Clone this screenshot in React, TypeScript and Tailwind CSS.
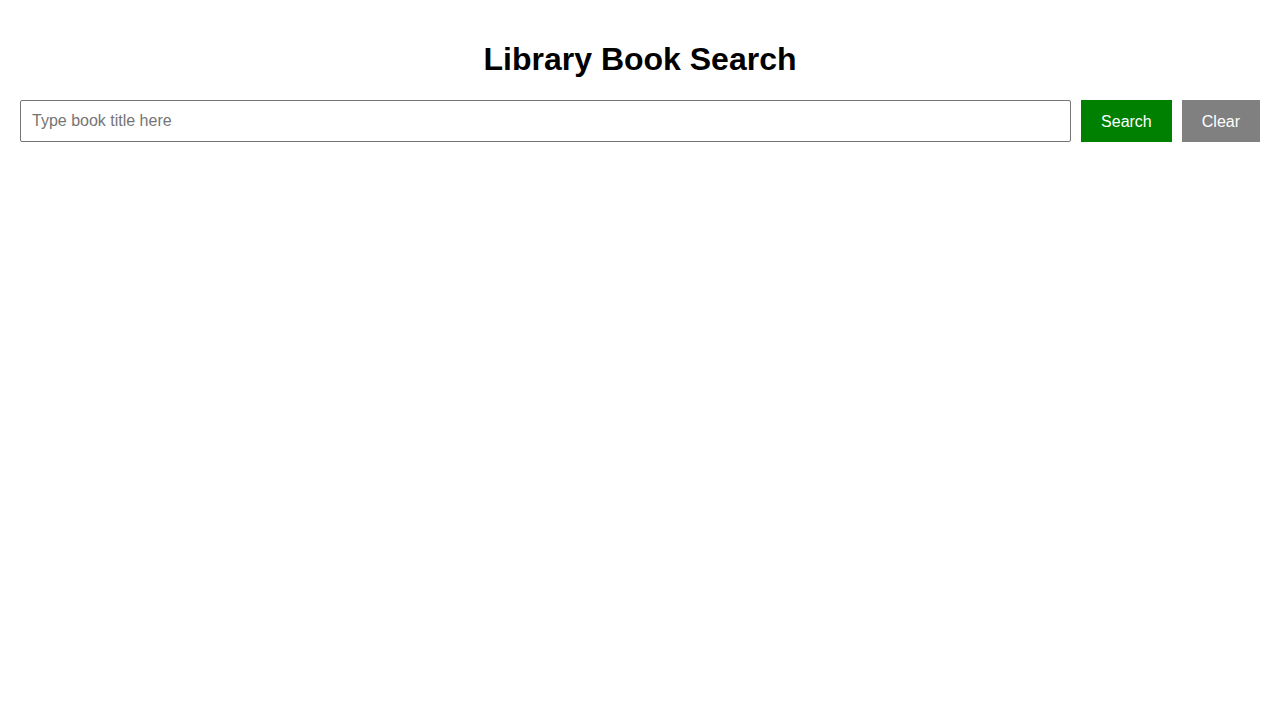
export default function App() {
  return (
    <div className="min-h-screen bg-white p-5 font-['Liberation_Sans',Arial,sans-serif] text-black">
      <h1 className="mt-[21px] mb-[22px] text-center text-[32px] font-bold leading-[37px]">Library Book Search</h1>
      <div className="flex gap-[10px]">
        <input
          type="text"
          placeholder="Type book title here"
          className="h-[42px] flex-1 rounded-[2px] border border-[#767676] px-[11px] text-base text-black placeholder:text-[#757575] outline-none"
        />
        <button className="h-[42px] bg-[#008000] px-5 pt-[2px] text-base text-white">Search</button>
        <button className="h-[42px] bg-[#808080] px-5 pt-[2px] text-base text-white">Clear</button>
      </div>
    </div>
  )
}
